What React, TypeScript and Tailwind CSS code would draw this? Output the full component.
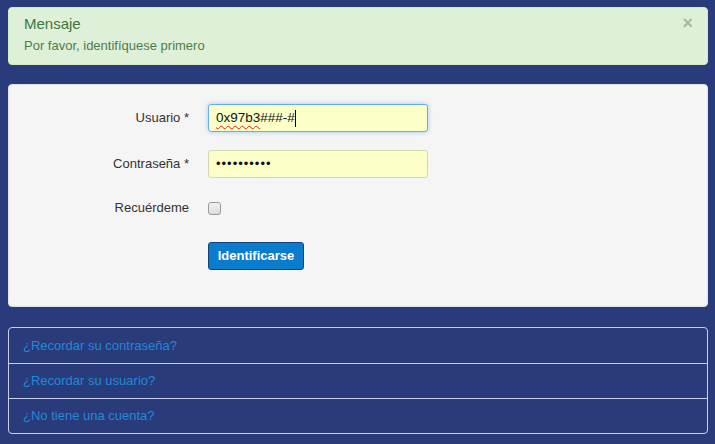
import React from "react";

export default function App() {
  return (
    <div
      className="w-[715px] h-[444px] bg-[#2a3b7b] px-[8px] pt-[7px] pr-[7px] overflow-hidden"
      style={{ fontFamily: '"Liberation Sans", Arial, sans-serif' }}
    >
      {/* Alert */}
      <div className="relative h-[58px] rounded-[4px] bg-[#dff0d8] border border-[#d6e9c6] pl-[15px] pt-[6px]">
        <div className="text-[15px] leading-[20px] text-[#3c763d]">Mensaje</div>
        <div className="mt-[3px] text-[13px] leading-[18px] text-[#4b7d4b]">
          Por favor, identifíquese primero
        </div>
        <div className="absolute right-[14px] top-[5px] text-[18px] leading-[20px] font-bold text-[#a6b8a0]">
          ×
        </div>
      </div>

      {/* Form panel */}
      <div className="mt-[19px] h-[223px] rounded-[4px] bg-[#f5f5f5] border border-[#e3e3e3] pt-[19px]">
        <div className="flex items-center h-[28px]">
          <div className="w-[180px] text-right text-[13px] text-[#333]">Usuario *</div>
          <div className="ml-[19px] w-[220px] h-[28px] rounded-[3px] border border-[#66afe9] bg-[#fdffc8] shadow-[0_0_5px_rgba(102,175,233,0.6)] flex items-center pl-[7px] text-[13.5px] text-[#111]">
            <span className="underline decoration-wavy decoration-[#e02020] decoration-1 underline-offset-[3px]">0x97b3</span>
            <span>###-#</span>
            <span className="inline-block w-[1px] h-[17px] bg-black" />
          </div>
        </div>
        <div className="flex items-center h-[28px] mt-[18px]">
          <div className="w-[180px] text-right text-[13px] text-[#333]">Contraseña *</div>
          <div className="ml-[19px] w-[220px] h-[28px] rounded-[3px] border border-[#d3d7b0] bg-[#fdffc8] flex items-center pl-[7px] text-[13px] tracking-[1px] text-[#111]">
            ••••••••••
          </div>
        </div>
        <div className="flex items-center h-[20px] mt-[20px]">
          <div className="w-[180px] text-right text-[13px] text-[#333]">Recuérdeme</div>
          <div className="ml-[19px] w-[13px] h-[13px] rounded-[3px] border border-[#9a9a9a] bg-gradient-to-b from-[#f2f2f2] to-[#dcdcdc]" />
        </div>
        <div className="flex mt-[24px]">
          <div className="w-[199px]" />
          <div className="w-[96px] h-[28px] rounded-[3px] border border-[#17437a] bg-[#0a7ccd] flex items-center justify-center text-white text-[13px] font-bold">
            Identificarse
          </div>
        </div>
      </div>

      {/* Links */}
      <div className="mt-[20px] rounded-[4px] border border-[#c9d1ea] overflow-hidden">
        {["¿Recordar su contraseña?", "¿Recordar su usuario?", "¿No tiene una cuenta?"].map((t, i) => (
          <div
            key={t}
            className={`h-[35px] flex items-center pl-[14px] text-[13px] text-[#1e8ad8] ${i > 0 ? "border-t border-[#c9d1ea]" : ""}`}
          >
            {t}
          </div>
        ))}
      </div>
    </div>
  );
}
